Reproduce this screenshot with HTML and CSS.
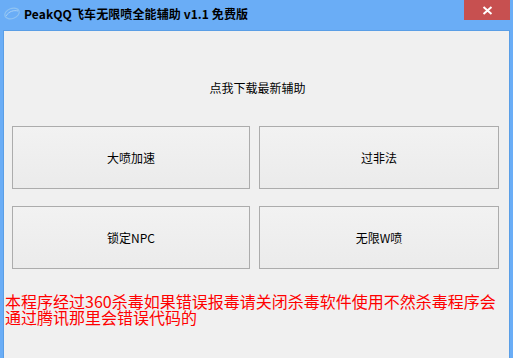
FILE: index.html
```html
<!DOCTYPE html>
<html lang="zh-CN">
<head>
    <meta charset="UTF-8">
    <title>PeakQQ飞车无限喷全能辅助 v1.1 免费版</title>
    <link rel="stylesheet" href="styles.css">
</head>
<body>
    <div class="window">
        <div class="titlebar">
            <svg class="app-icon" width="18" height="16" viewBox="0 0 18 16">
                <ellipse cx="9" cy="8.5" rx="7.5" ry="5" fill="none" stroke="#8fc3f2" stroke-width="1.2" transform="rotate(-20 9 8.5)"/>
                <path d="M3 11 C6 6, 11 5, 15 6" fill="none" stroke="#a9d2f7" stroke-width="1"/>
            </svg>
            <span class="title">PeakQQ飞车无限喷全能辅助 v1.1 免费版</span>
            <div class="close">
                <svg width="11" height="9" viewBox="0 0 11 9">
                    <path d="M1.5 1 L9.5 8 M9.5 1 L1.5 8" stroke="#fff" stroke-width="2"/>
                </svg>
            </div>
        </div>
        <div class="client">
            <div class="update">点我下载最新辅助</div>
            <div class="btn-grid">
                <button class="btn">大喷加速</button>
                <button class="btn">过非法</button>
                <button class="btn">锁定NPC</button>
                <button class="btn">无限W喷</button>
            </div>
            <p class="warn">本程序经过360杀毒如果错误报毒请关闭杀毒软件使用不然杀毒程序会通过腾讯那里会错误代码的</p>
        </div>
    </div>
</body>
</html>
```

FILE: styles.css
```css
*{
    margin: 0;
    padding: 0;
    box-sizing: border-box;
}
html,body{
    width:513px;
    height:358px;
    overflow: hidden;
}
body{
    background:#6aadf6;
    font-family: "Noto Sans CJK SC", "Liberation Sans", sans-serif;
    font-size:12px;
    color:#000;
}
.window{
    width:513px;
    height:358px;
    display:flex;
    flex-direction:column;
    background:#6aadf6;
}
.titlebar{
    height:30px;
    display:flex;
    align-items:flex-start;
    position: relative;
}
.app-icon{
    margin:5px 3px 0 3px;
}
.title{
    font-weight:bold;
    font-size:12px;
    line-height:14px;
    margin-top:7px;
    letter-spacing:0.1px;
}
.close{
    position: absolute;
    top:0;
    left:464px;
    width:46px;
    height:20px;
    background:#c75050;
    display:flex;
    align-items:center;
    justify-content:center;
}
.client{
    flex:1;
    margin:0 3px 0 3px;
    background:#f0f0f0;
    border-top:1px solid #5a9ee6;
    border-left:1px solid #5a9ee6;
    border-right:1px solid #5a9ee6;
    padding:0 10px 0 8px;
}
.update{
    margin-top:49px;
    padding-left:4px;
    height:16px;
    line-height:16px;
    text-align:center;
}
.btn-grid{
    margin-top:30px;
    display:grid;
    grid-template-columns:238px 240px;
    grid-template-rows:63px 63px;
    column-gap:9px;
    row-gap:17px;
}
.btn{
    font-family: "Noto Sans CJK SC", "Liberation Sans", sans-serif;
    font-size:12px;
    color:#000;
    border:1px solid #acacac;
    background:linear-gradient(#f2f2f2, #ebebeb);
}
.warn{
    margin:24px 0 0 -7px;
    width:498px;
    color:#ff0000;
    font-size:16px;
    line-height:16px;
}
```
